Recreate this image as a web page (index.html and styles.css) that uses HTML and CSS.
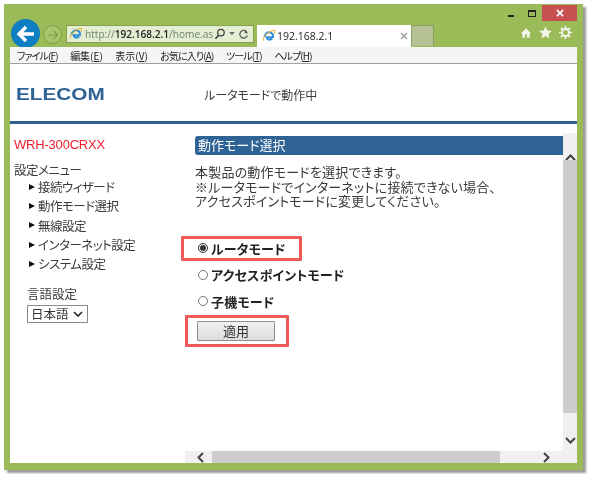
FILE: index.html
```html
<!DOCTYPE html>
<html lang="ja">
<head>
    <meta charset="UTF-8">
    <title>WRH-300CRXX</title>
    <link rel="stylesheet" href="styles.css">
</head>
<body>
    <div class="window">
        <div class="controls">
            <span class="ctl-min"></span>
            <span class="ctl-max"></span>
            <span class="ctl-close">
                <svg width="8" height="8" viewBox="0 0 9 9"><path d="M1 1l7 7M8 1l-7 7" stroke="#fff" stroke-width="1.800"/></svg>
            </span>
        </div>
        <div class="navbar">
            <div class="back">
                <svg width="20" height="18" viewBox="0 0 20 18"><path d="M18 9H4M10 2L3 9l7 7" fill="none" stroke="#fff" stroke-width="3.400"/></svg>
            </div>
            <div class="forward">
                <svg width="12" height="10" viewBox="0 0 12 10"><path d="M1 5h9M6.500 1L10.500 5l-4 4" fill="none" stroke="#7f9c48" stroke-width="1.200"/></svg>
            </div>
            <div class="address">
                <svg class="ie" width="14" height="14" viewBox="0 0 16 16"><use href="#ie-logo"/></svg>
                <span class="url">http://<b>192.168.2.1</b>/home.as</span>
                <svg class="addr-icon" width="12" height="12" viewBox="0 0 13 13"><circle cx="7.500" cy="5" r="3.600" fill="none" stroke="#444" stroke-width="1.400"/><path d="M5 8l-3.500 3.500" stroke="#444" stroke-width="1.800"/></svg>
                <svg class="addr-icon" width="6" height="4" viewBox="0 0 7 5"><path d="M0 0h7L3.500 4z" fill="#666"/></svg>
                <svg class="addr-icon" width="11" height="11" viewBox="0 0 12 12"><path d="M9.500 3.200A4.200 4.200 0 1 0 10.200 7" fill="none" stroke="#555" stroke-width="1.400"/><path d="M7.500 0.500v4h3.500z" fill="#555"/></svg>
            </div>
            <div class="tab">
                <svg class="ie" width="14" height="14" viewBox="0 0 16 16">
                    <g id="ie-logo">
                        <path d="M3 9.500c0-4 3.500-6.500 6.500-5.500 2.500 1 3.500 3 3 5.500H5.500c0 3 4 3.500 6 1.500" fill="none" stroke="#2f8fd8" stroke-width="2.200"/>
                        <path d="M1.500 13.500C0 11 6 3 13 1.500c2-.3 2 1.800 1 4" fill="none" stroke="#e9b23c" stroke-width="1.200"/>
                    </g>
                </svg>
                <span class="tab-title">192.168.2.1</span>
                <svg width="8" height="8" viewBox="0 0 8 8"><path d="M1 1l6 6M7 1l-6 6" stroke="#999" stroke-width="1.300"/></svg>
            </div>
            <div class="new-tab"></div>
            <div class="tools">
                <svg width="12" height="12" viewBox="0 0 15 14"><path d="M7.500 1L1 7.500h2V13h3.200V9h2.600v4H12V7.500h2z" fill="#f4f6ee"/></svg>
                <svg width="13" height="13" viewBox="0 0 15 14"><path d="M7.500 0l2.100 4.800 5.200.5-3.900 3.400 1.200 5.100-4.600-2.700-4.600 2.700 1.200-5.100L.2 5.300l5.200-.5z" fill="#f4f6ee"/></svg>
                <svg width="13" height="13" viewBox="0 0 15 15"><circle cx="7.500" cy="7.500" r="4" fill="none" stroke="#f4f6ee" stroke-width="2.200"/><path d="M7.500 0v3M7.500 12v3M0 7.500h3M12 7.500h3M2.200 2.200l2.100 2.100M10.700 10.700l2.100 2.100M12.800 2.200l-2.100 2.100M4.300 10.700l-2.100 2.100" stroke="#f4f6ee" stroke-width="2"/></svg>
            </div>
        </div>
        <div class="menubar">
            <span class="tight">ファイル(<u>F</u>)</span>
            <span>編集(<u>E</u>)</span>
            <span>表示(<u>V</u>)</span>
            <span class="tight">お気に入り(<u>A</u>)</span>
            <span class="tight">ツール(<u>T</u>)</span>
            <span class="tight">ヘルプ(<u>H</u>)</span>
        </div>
        <div class="page">
            <div class="header">
                <div class="logo"><span>ELECOM</span></div>
                <div class="status">ルータモードで動作中</div>
            </div>
            <div class="body">
                <div class="sidebar">
                    <div class="model">WRH-300CRXX</div>
                    <div class="menu-title">設定メニュー</div>
                    <ul class="menu">
                        <li>接続ウィザード</li>
                        <li>動作モード選択</li>
                        <li>無線設定</li>
                        <li>インターネット設定</li>
                        <li>システム設定</li>
                    </ul>
                    <div class="lang">
                        <label for="lang-select">言語設定</label>
                        <div class="select-box">
                            <select id="lang-select"><option>日本語</option></select>
                            <svg class="select-arrow" width="10" height="6" viewBox="0 0 10 6"><path d="M1 1l4 4 4-4" fill="none" stroke="#222" stroke-width="1.600"/></svg>
                        </div>
                    </div>
                </div>
                <div class="frame">
                    <div class="main">
                        <h2>動作モード選択</h2>
                        <p>本製品の動作モードを選択できます。<br>※ルータモードでインターネットに接続できない場合、<br>アクセスポイントモードに変更してください。</p>
                        <form class="modes">
                            <label><input type="radio" name="mode" checked>ルータモード</label>
                            <label><input type="radio" name="mode">アクセスポイントモード</label>
                            <label><input type="radio" name="mode">子機モード</label>
                            <button type="button" class="apply">適用</button>
                        </form>
                        <div class="mark mark-radio"></div>
                        <div class="mark mark-button"></div>
                    </div>
                    <div class="vscroll">
                        <div class="arrow-up"><svg width="11" height="7" viewBox="0 0 11 7"><path d="M1 6l4.500-4.500L10 6" fill="none" stroke="#444" stroke-width="2"/></svg></div>
                        <div class="vthumb"></div>
                        <div class="arrow-down"><svg width="11" height="7" viewBox="0 0 11 7"><path d="M1 1l4.500 4.500L10 1" fill="none" stroke="#444" stroke-width="2"/></svg></div>
                    </div>
                    <div class="hscroll">
                        <div class="arrow-left"><svg width="7" height="11" viewBox="0 0 7 11"><path d="M6 1L1.500 5.500 6 10" fill="none" stroke="#444" stroke-width="2"/></svg></div>
                        <div class="hthumb"></div>
                        <div class="arrow-right"><svg width="7" height="11" viewBox="0 0 7 11"><path d="M1 1l4.500 4.500L1 10" fill="none" stroke="#444" stroke-width="2"/></svg></div>
                    </div>
                    <div class="corner"></div>
                </div>
            </div>
        </div>
    </div>
</body>
</html>
```

FILE: styles.css
```css
:root {
    --green: #9bbb59;
    --blue: #2f6396;
    --text-color: #3a3a3a;
    --scroll-bg: #f0f0f0;
    --thumb: #cdcdcd;
    --mark: #ee5a5a;
}

* {
    margin: 0;
    padding: 0;
    box-sizing: border-box;
}

body {
    background: #ffffff;
    color: var(--text-color);
    font-family: "Noto Sans CJK JP", "Liberation Sans", sans-serif;
    font-size: 13px;
    font-feature-settings: "palt";
}

.window {
    position: relative;
    width: 579px;
    height: 466px;
    margin: 4px;
    padding: 16px 6px 7px;
    background: var(--green);
    box-shadow: 3px 3px 2px #9a9a9a;
    display: flex;
    flex-direction: column;
    filter: blur(0.35px);
}

/* caption buttons */
.controls {
    position: absolute;
    top: 1px;
    right: 6px;
    display: flex;
    align-items: center;
}

.ctl-min {
    width: 6px;
    height: 2px;
    margin: 6px 14px 0 0;
    background: #222;
}

.ctl-max {
    width: 8px;
    height: 7px;
    margin-right: 6px;
    border: 1px solid #222;
    border-top-width: 2px;
}

.ctl-close {
    width: 35px;
    height: 16px;
    background: #c75050;
    display: flex;
    align-items: center;
    justify-content: center;
}

/* nav row */
.navbar {
    height: 27px;
    display: flex;
    align-items: flex-start;
}

.back {
    width: 29px;
    height: 29px;
    margin: -1px 0 -2px 1px;
    border-radius: 50%;
    background: #0f7fc4;
    display: flex;
    align-items: center;
    justify-content: center;
}

.forward {
    width: 19px;
    height: 19px;
    margin: 5px 0 0 3px;
    border-radius: 50%;
    border: 1px solid #7f9c48;
    background: #a9c56c;
    display: flex;
    align-items: center;
    justify-content: center;
}

.address {
    width: 188px;
    height: 18px;
    margin: 5px 0 0 4px;
    padding: 0 4px 0 2px;
    background: #e4eed2;
    border: 1px solid #86a24c;
    display: flex;
    align-items: center;
    gap: 3px;
}

.ie {
    flex: none;
}

.url {
    flex: 1;
    min-width: 0;
    margin-left: -1px;
    font-family: "Open Sans", sans-serif;
    font-size: 10.100px;
    color: #6d7f6f;
    white-space: nowrap;
}

.url b {
    color: #222;
    font-weight: 600;
}

.addr-icon {
    flex: none;
}

.tab {
    width: 154px;
    height: 22px;
    margin: 5px 0 0 3px;
    padding: 0 3px 0 5px;
    background: #ffffff;
    display: flex;
    align-items: center;
    gap: 1px;
}

.tab-title {
    flex: 1;
    font-family: "Open Sans", sans-serif;
    font-size: 10.500px;
    color: #222;
}

.new-tab {
    width: 23px;
    height: 21px;
    margin-top: 5px;
    background: #b5c194;
    border: 1px solid #8aa05a;
    border-bottom: none;
}

.tools {
    margin: 6px 5px 0 auto;
    display: flex;
    align-items: center;
    gap: 7px;
}

/* menu bar */
.menubar {
    height: 17px;
    padding-left: 7px;
    background: #f5f5f5;
    border-bottom: 1px solid #a0a0a0;
    display: flex;
    align-items: center;
    gap: 12.500px;
    font-size: 10px;
    color: #222;
}

.tight {
    letter-spacing: -0.900px;
}

/* page */
.page {
    flex: 1;
    min-height: 0;
    background: #ffffff;
    display: flex;
    flex-direction: column;
}

.header {
    height: 60px;
    border-bottom: 3px solid var(--blue);
    display: flex;
    align-items: center;
    padding: 5px 0 0 6px;
}

.logo {
    width: 188px;
    font-family: "Liberation Sans", sans-serif;
    font-weight: 700;
    font-size: 17px;
    color: var(--blue);
}

.logo span {
    display: inline-block;
    transform: scaleX(1.220);
    transform-origin: left center;
}

.status {
    margin-top: -2px;
    font-size: 12px;
}

.body {
    flex: 1;
    min-height: 0;
    display: flex;
}

.sidebar {
    width: 175px;
    padding: 13px 0 0 4px;
    font-size: 12.500px;
}

.model {
    font-family: "Liberation Sans", sans-serif;
    font-size: 13px;
    letter-spacing: -0.200px;
    color: #f01c2c;
    line-height: 16px;
}

.menu-title {
    margin-top: 9px;
    line-height: 16px;
    letter-spacing: -0.500px;
}

.menu {
    list-style: none;
    margin-top: -1px;
    padding-left: 15px;
    letter-spacing: -0.500px;
}

.menu li {
    display: flex;
    align-items: center;
    height: 19.300px;
}

.menu li::before {
    content: "";
    margin-right: 3px;
    border-left: 6px solid #111;
    border-top: 3.500px solid transparent;
    border-bottom: 3.500px solid transparent;
}

.lang {
    margin: 13px 0 0 13px;
}

.lang label {
    display: block;
    line-height: 16px;
}

.select-box {
    position: relative;
    width: 61px;
    height: 18px;
    margin-top: 3px;
}

.select-box select {
    display: block;
    width: 100%;
    height: 100%;
    padding: 0 0 0 3px;
    font-family: inherit;
    font-size: 12.500px;
    line-height: 16px;
    color: #333;
    background: #fff;
    border: 1px solid #8a8a8a;
    border-radius: 0;
    appearance: none;
}

.select-arrow {
    position: absolute;
    top: 6px;
    right: 5px;
}

/* right frame with its scrollbars */
.frame {
    flex: 1;
    margin-top: 9px;
    display: grid;
    grid-template-columns: 1fr 14px;
    grid-template-rows: 1fr 12px;
    min-width: 0;
}

.main {
    position: relative;
    padding: 3px 0 0 10px;
}

.main h2 {
    height: 19px;
    padding-left: 3px;
    background: var(--blue);
    border-radius: 3px 0 0 3px;
    color: #fff;
    font-size: 13px;
    font-weight: 400;
    line-height: 18px;
}

.main p {
    margin-top: 10px;
    line-height: 14.700px;
    letter-spacing: 0.200px;
}

.modes {
    margin-top: 26px;
    display: flex;
    flex-direction: column;
}

.modes label {
    height: 26.500px;
    padding-left: 3px;
    display: flex;
    align-items: center;
    font-weight: 700;
    color: #222;
    letter-spacing: 0.200px;
}

.modes input {
    width: 10px;
    height: 10px;
    margin-right: 3px;
    accent-color: #333;
}

.apply {
    width: 78px;
    height: 20px;
    margin: 6px 0 0 2px;
    font-family: inherit;
    font-size: 13px;
    line-height: 16px;
    color: #333;
    background: linear-gradient(#f2f2f2, #dcdcdc);
    border: 1px solid #8f8f8f;
    border-radius: 1px;
}

/* red annotation boxes */
.mark {
    position: absolute;
    border: 3px solid var(--mark);
    border-radius: 1px;
}

.mark-radio {
    left: -4px;
    top: 103px;
    width: 121px;
    height: 25px;
}

.mark-button {
    left: 0;
    top: 182px;
    width: 104px;
    height: 32px;
}

.vscroll {
    background: var(--scroll-bg);
    display: flex;
    flex-direction: column;
}

.arrow-up {
    height: 27px;
    padding-top: 13px;
    text-align: center;
}

.vthumb {
    height: 253px;
    background: var(--thumb);
}

.arrow-down {
    flex: 1;
    padding-top: 16px;
    text-align: center;
}

.hscroll {
    background: var(--scroll-bg);
    display: flex;
    align-items: center;
}

.arrow-left {
    width: 27px;
    padding-left: 12px;
    display: flex;
}

.hthumb {
    width: 288px;
    height: 12px;
    background: var(--thumb);
}

.arrow-right {
    flex: 1;
    padding-left: 43px;
    display: flex;
}

.corner {
    background: var(--scroll-bg);
}
```
